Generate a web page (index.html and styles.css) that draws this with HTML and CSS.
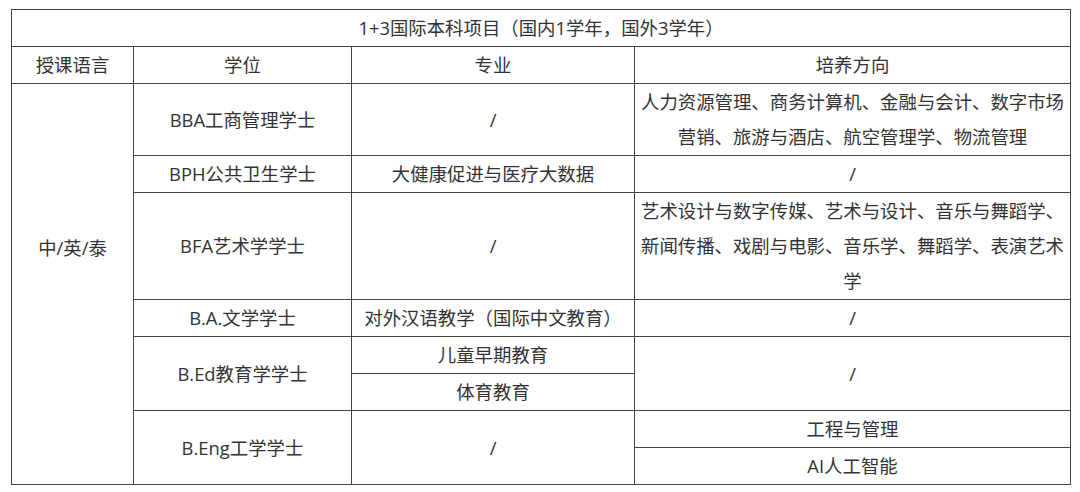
FILE: index.html
```html
<!DOCTYPE html>
<html lang="zh-CN">
<head>
<meta charset="utf-8">
<title>1+3国际本科项目</title>
<link rel="stylesheet" href="styles.css">
</head>
<body>
<div class="page">
<table class="prog">
  <colgroup>
    <col class="c1"><col class="c2"><col class="c3"><col class="c4">
  </colgroup>
  <tbody>
    <tr><td colspan="4">1+3国际本科项目（国内1学年，国外3学年）</td></tr>
    <tr><td>授课语言</td><td>学位</td><td>专业</td><td>培养方向</td></tr>
    <tr>
      <td rowspan="8" class="lang">中/英/泰</td>
      <td>BBA工商管理学士</td>
      <td>/</td>
      <td>人力资源管理、商务计算机、金融与会计、数字市场营销、旅游与酒店、航空管理学、物流管理</td>
    </tr>
    <tr><td>BPH公共卫生学士</td><td>大健康促进与医疗大数据</td><td>/</td></tr>
    <tr><td>BFA艺术学学士</td><td>/</td><td>艺术设计与数字传媒、艺术与设计、音乐与舞蹈学、新闻传播、戏剧与电影、音乐学、舞蹈学、表演艺术学</td></tr>
    <tr><td>B.A.文学学士</td><td>对外汉语教学（国际中文教育）</td><td>/</td></tr>
    <tr><td rowspan="2">B.Ed教育学学士</td><td>儿童早期教育</td><td rowspan="2">/</td></tr>
    <tr><td>体育教育</td></tr>
    <tr><td rowspan="2">B.Eng工学学士</td><td rowspan="2">/</td><td>工程与管理</td></tr>
    <tr><td>AI人工智能</td></tr>
  </tbody>
</table>
</div>
</body>
</html>
```

FILE: styles.css
```css
html, body {
  margin: 0;
  padding: 0;
  background: #ffffff;
}

.page {
  padding: 9px 0 0 11px;
}

.prog {
  border-collapse: collapse;
  table-layout: fixed;
  width: 1059px;
  font-family: "Open Sans", "Noto Sans CJK SC", sans-serif;
  font-size: 18.4px;
  color: #333333;
}

.prog .c1 { width: 122px; }
.prog .c2 { width: 218px; }
.prog .c3 { width: 283px; }
.prog .c4 { width: 436px; }

.prog td {
  border: 1px solid #444444;
  text-align: center;
  vertical-align: middle;
  line-height: 35px;
  padding: 0 4px 1px;
  word-break: break-all;
}

.prog td.lang {
  padding-bottom: 74px;
}
```
